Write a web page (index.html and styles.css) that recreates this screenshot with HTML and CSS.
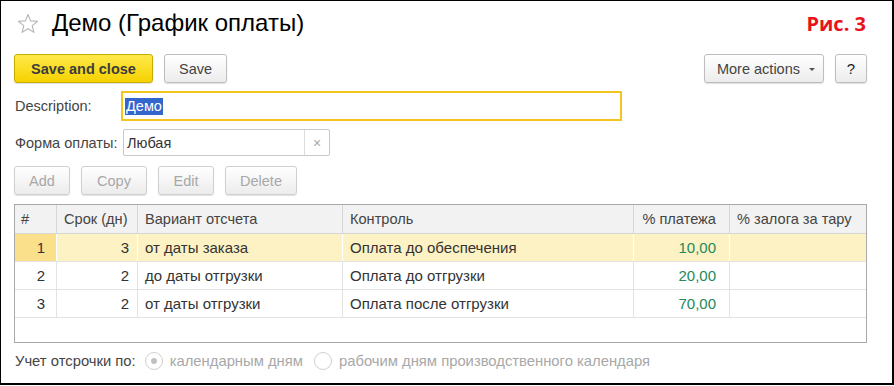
FILE: index.html
```html
<!DOCTYPE html>
<html lang="ru">
<head>
    <meta charset="UTF-8">
    <title>Демо (График оплаты)</title>
    <link rel="stylesheet" href="styles.css">
</head>
<body>
    <div class="frame">
        <!-- Title -->
        <div class="title-bar">
            <svg class="star" width="22" height="21" viewBox="0 0 22 21">
                <path d="M11 1.5 L13.6 7.9 L20.5 8.3 L15.2 12.7 L16.9 19.4 L11 15.7 L5.1 19.4 L6.8 12.7 L1.5 8.3 L8.4 7.9 Z" fill="none" stroke="#b4b4b4" stroke-width="1.1" stroke-linejoin="round"/>
            </svg>
            <h1 class="title">Демо (График оплаты)</h1>
            <span class="fig-label">Рис. 3</span>
        </div>

        <!-- Command bar -->
        <div class="toolbar">
            <button class="btn btn-primary">Save and close</button>
            <button class="btn">Save</button>
            <div class="spacer"></div>
            <button class="btn btn-more">More actions <span class="caret"></span></button>
            <button class="btn btn-help">?</button>
        </div>

        <!-- Fields -->
        <div class="field-row row-desc">
            <label class="field-label label-desc">Description:</label>
            <div class="input input-focus"><span class="selected">Демо</span></div>
        </div>
        <div class="field-row row-form">
            <label class="field-label label-form">Форма оплаты:</label>
            <div class="input input-select">
                <span class="input-value">Любая</span>
                <span class="clear-btn">×</span>
            </div>
        </div>

        <!-- Table commands -->
        <div class="table-bar">
            <button class="btn btn-disabled btn-add">Add</button>
            <button class="btn btn-disabled btn-copy">Copy</button>
            <button class="btn btn-disabled btn-edit">Edit</button>
            <button class="btn btn-disabled btn-delete">Delete</button>
        </div>

        <!-- Table -->
        <div class="grid">
            <div class="grid-row grid-head">
                <div class="cell c-num">#</div>
                <div class="cell c-days">Срок (дн)</div>
                <div class="cell c-var">Вариант отсчета</div>
                <div class="cell c-ctrl">Контроль</div>
                <div class="cell c-pay">% платежа</div>
                <div class="cell c-tara">% залога за тару</div>
            </div>
            <div class="grid-row row-current">
                <div class="cell c-num num">1</div>
                <div class="cell c-days num">3</div>
                <div class="cell c-var">от даты заказа</div>
                <div class="cell c-ctrl">Оплата до обеспечения</div>
                <div class="cell c-pay num money">10,00</div>
                <div class="cell c-tara"></div>
            </div>
            <div class="grid-row">
                <div class="cell c-num num">2</div>
                <div class="cell c-days num">2</div>
                <div class="cell c-var">до даты отгрузки</div>
                <div class="cell c-ctrl">Оплата до отгрузки</div>
                <div class="cell c-pay num money">20,00</div>
                <div class="cell c-tara"></div>
            </div>
            <div class="grid-row">
                <div class="cell c-num num">3</div>
                <div class="cell c-days num">2</div>
                <div class="cell c-var">от даты отгрузки</div>
                <div class="cell c-ctrl">Оплата после отгрузки</div>
                <div class="cell c-pay num money">70,00</div>
                <div class="cell c-tara"></div>
            </div>
        </div>

        <!-- Radio -->
        <div class="radio-row">
            <span class="radio-label">Учет отсрочки по:</span>
            <span class="radio checked"></span>
            <span class="radio-text">календарным дням</span>
            <span class="radio"></span>
            <span class="radio-text">рабочим дням производственного календаря</span>
        </div>
    </div>
</body>
</html>
```

FILE: styles.css
```css
/* Global */
body {
    margin: 0;
    background-color: #ffffff;
    font-family: Arial, "Liberation Sans", sans-serif;
    font-size: 14.5px;
    color: #333333;
}

.frame {
    width: 894px;
    height: 385px;
    box-sizing: border-box;
    border-top: 1px solid #000000;
    border-left: 1px solid #000000;
    border-right: 2px solid #000000;
    border-bottom: 2px solid #000000;
    padding: 0 25px 0 13px;
}

/* Title */
.title-bar {
    display: flex;
    align-items: center;
    height: 44px;
    padding-left: 3px;
}

.star {
    margin-right: 13px;
    margin-top: 1px;
}

.title {
    margin: 0;
    font-size: 24px;
    font-weight: normal;
    color: #000000;
    flex: 1;
}

.fig-label {
    color: #e8141c;
    font-weight: bold;
    font-size: 20px;
    font-family: "Open Sans", Arial, sans-serif;
    margin-right: 1px;
    margin-top: 1px;
}

/* Buttons */
.toolbar {
    display: flex;
    align-items: center;
    margin-top: 9px;
    height: 29px;
}

.spacer {
    flex: 1;
}

.btn {
    height: 29px;
    box-sizing: border-box;
    padding: 0 14px;
    border: 1px solid #bdbdbd;
    border-radius: 3px;
    background: linear-gradient(#ffffff, #ececec);
    box-shadow: 0 1px 1px rgba(0, 0, 0, 0.12);
    font-family: Arial, "Liberation Sans", sans-serif;
    font-size: 14.5px;
    color: #444444;
    margin-right: 11px;
}

.btn-primary {
    width: 139px;
    padding: 0;
    background: linear-gradient(#ffe94a, #f6d200);
    border-color: #c9ac00;
    font-weight: bold;
    color: #3c3c3c;
}

.btn-more {
    width: 120px;
    padding: 0 0 0 4px;
}

.caret {
    display: inline-block;
    width: 0;
    height: 0;
    border-left: 3px solid transparent;
    border-right: 3px solid transparent;
    border-top: 3px solid #555555;
    vertical-align: middle;
    margin-left: 5px;
}

.btn-help {
    width: 32px;
    padding: 0;
    margin-right: 0;
    font-size: 15px;
    color: #222222;
}

/* Fields */
.field-row {
    display: flex;
    align-items: center;
}

.row-desc {
    margin-top: 8px;
}

.row-form {
    margin-top: 8px;
}

.field-label {
    color: #444444;
    padding-left: 1px;
}

.label-desc {
    width: 106px;
}

.label-form {
    width: 108px;
}

.input {
    box-sizing: border-box;
    display: flex;
    align-items: center;
    background: #ffffff;
}

.input-focus {
    width: 501px;
    height: 30px;
    border: 2px solid #f3c520;
    padding-left: 2px;
}

.selected {
    background-color: #3366cc;
    color: #ffffff;
    line-height: 17px;
    padding: 0 1px;
}

.input-select {
    width: 207px;
    height: 27px;
    border: 1px solid #c8c8c8;
    border-radius: 2px;
}

.input-value {
    flex: 1;
    padding-left: 3px;
    color: #333333;
}

.clear-btn {
    width: 24px;
    height: 100%;
    border-left: 1px solid #dcdcdc;
    display: flex;
    align-items: center;
    justify-content: center;
    color: #a8a8a8;
    font-size: 14px;
}

/* Table commands */
.table-bar {
    display: flex;
    margin-top: 10px;
}

.btn-disabled {
    color: #a8a8a8;
    border-color: #d0d0d0;
    padding: 0;
}

.btn-add { width: 56px; }
.btn-copy { width: 66px; }
.btn-edit { width: 56px; }
.btn-delete { width: 72px; }

/* Grid */
.grid {
    margin-top: 9px;
    border: 1px solid #a9a9a9;
    height: 139px;
    box-sizing: border-box;
    font-size: 15px;
}

.grid-row {
    display: flex;
    height: 28px;
    box-sizing: border-box;
    border-bottom: 1px solid #e3e3e3;
}

.grid-head {
    height: 29px;
    background-color: #f2f2f2;
    border-bottom: 1px solid #d6d6d6;
    font-size: 14.6px;
}

.cell {
    box-sizing: border-box;
    padding: 0 7px;
    line-height: 27px;
    white-space: nowrap;
    overflow: hidden;
    color: #333333;
    border-right: 1px solid #e3e3e3;
}

.grid-head .cell {
    line-height: 28px;
    border-right: 1px solid #d6d6d6;
    color: #444444;
}

.cell:last-child {
    border-right: none;
}

.num {
    text-align: right;
}

.money {
    color: #24895a;
}

.c-num { width: 42px; padding-right: 11px; }
.c-days { width: 81px; padding-right: 8px; }
.c-var { width: 205px; }
.c-ctrl { width: 291px; }
.c-pay { width: 96px; padding-right: 13px; }
.c-tara { flex: 1; }

.grid-head .c-num {
    text-align: left;
    padding-left: 6px;
}

.grid-head .c-pay {
    text-align: right;
}

.row-current {
    background-color: #fdf2c4;
}

.row-current .cell {
    border-right-color: #ffffff;
}

.row-current .c-num {
    background-color: #fbe08c;
}

/* Radio row */
.radio-row {
    display: flex;
    align-items: center;
    margin-top: 9px;
    color: #a8a8a8;
    font-size: 14.8px;
}

.radio-label {
    color: #444444;
    margin-right: 9px;
    padding-left: 1px;
}

.radio {
    width: 18px;
    height: 18px;
    box-sizing: border-box;
    border: 1px solid #d0d0d0;
    border-radius: 50%;
    margin-right: 7px;
    display: flex;
    align-items: center;
    justify-content: center;
}

.radio.checked::after {
    content: "";
    width: 6px;
    height: 6px;
    border-radius: 50%;
    background-color: #c0c0c0;
}

.radio-text {
    margin-right: 11px;
}
```
